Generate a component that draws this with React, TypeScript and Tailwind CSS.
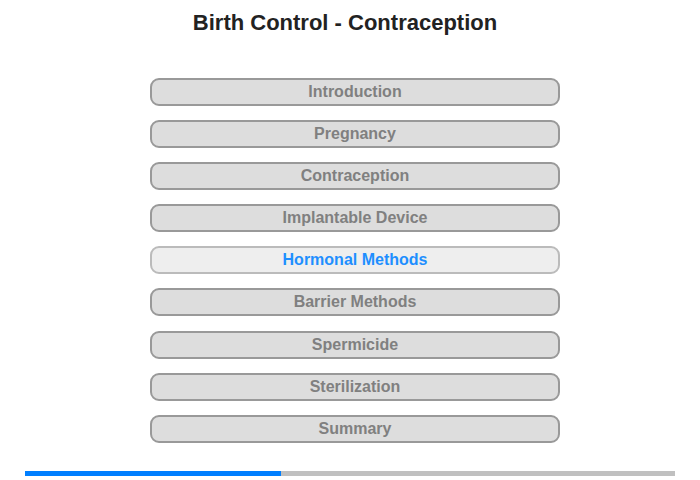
import React from "react";

const items = [
  "Introduction",
  "Pregnancy",
  "Contraception",
  "Implantable Device",
  "Hormonal Methods",
  "Barrier Methods",
  "Spermicide",
  "Sterilization",
  "Summary",
];

export default function App() {
  return (
    <div
      className="w-[700px] h-[480px] bg-white relative"
      style={{ fontFamily: '"Liberation Sans", Arial, sans-serif' }}
    >
      <h1 className="pt-[10px] pr-[10px] text-center text-[22px] leading-[26px] font-bold text-[#222222]">
        Birth Control - Contraception
      </h1>
      <div className="mt-[42px] pl-[10px] flex flex-col items-center gap-[14.1px]">
        {items.map((t) => {
          const active = t === "Hormonal Methods";
          return (
            <div
              key={t}
              className={
                active
                  ? "w-[410px] h-[28px] rounded-[9px] border-2 border-[#bbbbbb] bg-[#eeeeee] flex items-center justify-center text-[16px] font-bold text-[#1e8fff]"
                  : "w-[410px] h-[28px] rounded-[9px] border-2 border-[#999999] bg-[#dddddd] flex items-center justify-center text-[16px] font-bold text-[#808080]"
              }
            >
              {t}
            </div>
          );
        })}
      </div>
      <div className="mt-[28px] mx-[25px] h-[5px] bg-[#c0c0c0] flex">
        <div className="w-[256px] h-full bg-[#007fff]" />
      </div>
    </div>
  );
}
